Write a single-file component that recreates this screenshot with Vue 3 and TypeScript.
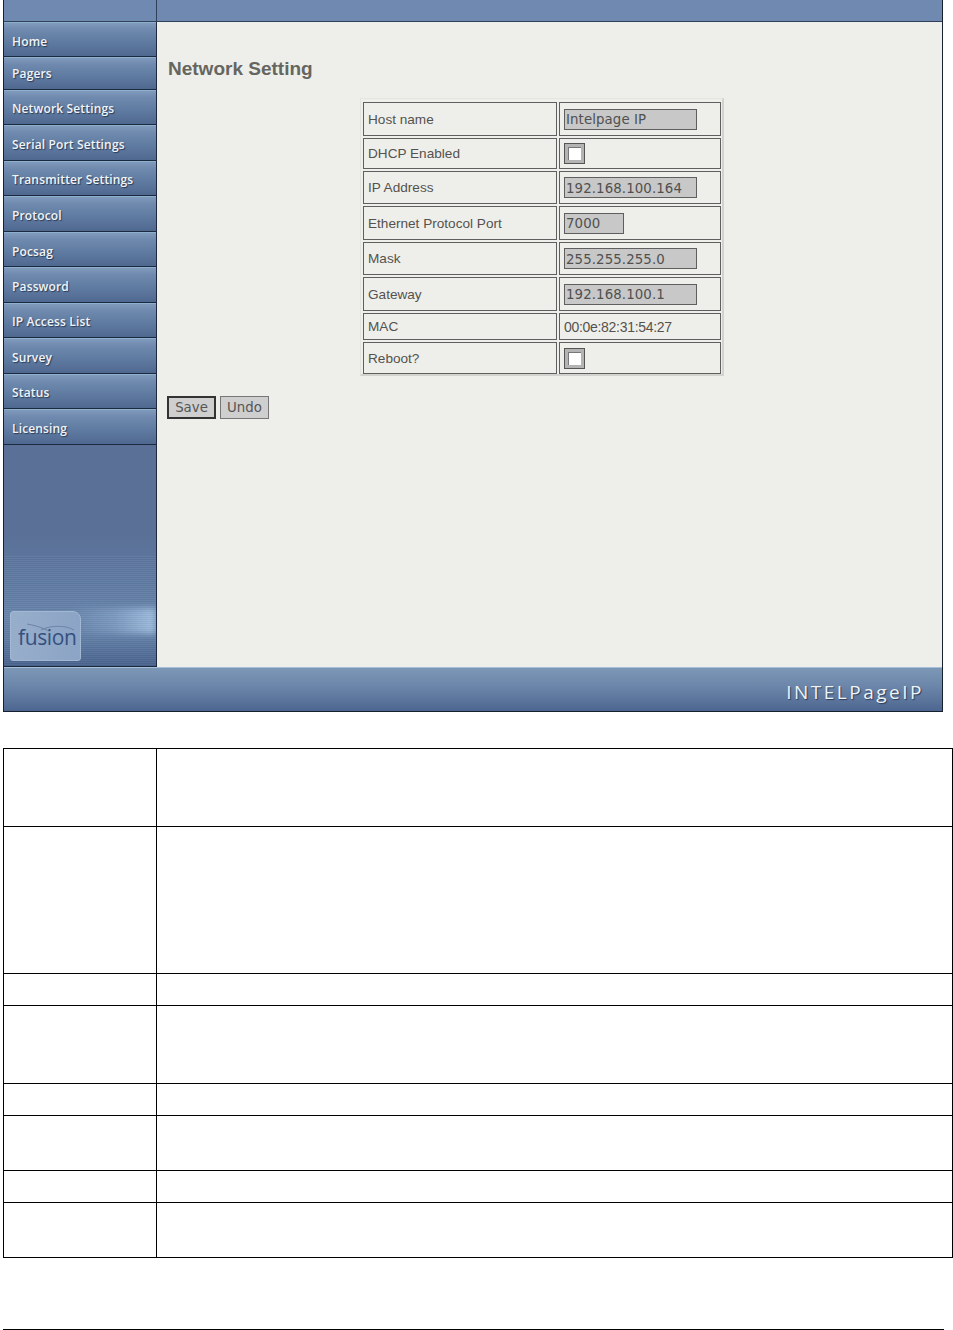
<script setup lang="ts">
const nav: { label: string; h: number; tight?: boolean; raised?: boolean }[] = [
  { label: 'Home', h: 35 },
  { label: 'Pagers', h: 33, tight: true },
  { label: 'Network Settings', h: 35, raised: true },
  { label: 'Serial Port Settings', h: 36 },
  { label: 'Transmitter Settings', h: 35, raised: true },
  { label: 'Protocol', h: 36 },
  { label: 'Pocsag', h: 35 },
  { label: 'Password', h: 36 },
  { label: 'IP Access List', h: 35, raised: true },
  { label: 'Survey', h: 36 },
  { label: 'Status', h: 35, raised: true },
  { label: 'Licensing', h: 36 }
]
const rows: { label: string; kind: 'text' | 'check' | 'plain'; value?: string; short?: boolean; h: number }[] = [
  { label: 'Host name', kind: 'text', value: 'Intelpage IP', h: 34 },
  { label: 'DHCP Enabled', kind: 'check', h: 31 },
  { label: 'IP Address', kind: 'text', value: '192.168.100.164', h: 33 },
  { label: 'Ethernet Protocol Port', kind: 'text', value: '7000', short: true, h: 34 },
  { label: 'Mask', kind: 'text', value: '255.255.255.0', h: 33 },
  { label: 'Gateway', kind: 'text', value: '192.168.100.1', h: 34 },
  { label: 'MAC', kind: 'plain', value: '00:0e:82:31:54:27', h: 27 },
  { label: 'Reboot?', kind: 'check', h: 32 }
]
const lower: number[] = [77, 146, 31, 77, 31, 54, 31, 54]
</script>

<template>
  <div class="page">
    <section class="shot">
      <div class="topbar">
        <div class="top-left"></div>
        <div class="top-right"></div>
      </div>
      <div class="middle">
        <aside class="side">
          <nav>
            <a
              v-for="n in nav"
              :key="n.label"
              class="nav-item"
              :class="{ tight: n.tight, raised: n.raised }"
              :style="{ height: n.h + 'px' }"
            >{{ n.label }}</a>
          </nav>
          <div class="side-rest">
            <div class="streak"></div>
            <div class="stripes"></div>
            <div class="logo">
              <svg class="arc" width="56" height="14" viewBox="0 0 56 14" aria-hidden="true">
                <path d="M8 2 C 14 3, 22 5, 30 9" fill="none" stroke="#6d84a8" stroke-width="1" />
                <path d="M22 8 C 32 3, 46 3, 55 8" fill="none" stroke="#6d84a8" stroke-width="1" />
              </svg>
              <span class="logo-text">fusion</span>
            </div>
          </div>
        </aside>
        <main class="content">
          <h1>Network Setting</h1>
          <div class="form-wrap">
            <div class="form">
              <template v-for="r in rows" :key="r.label">
                <div class="cell label" :style="{ height: r.h + 'px' }">{{ r.label }}</div>
                <div class="cell value" :style="{ height: r.h + 'px' }">
                  <span v-if="r.kind === 'text'" class="input" :class="{ short: r.short }">{{ r.value }}</span>
                  <span v-else-if="r.kind === 'check'" class="check"><i></i></span>
                  <span v-else class="mac">{{ r.value }}</span>
                </div>
              </template>
            </div>
          </div>
          <div class="buttons">
            <button class="btn primary" type="button">Save</button>
            <button class="btn" type="button">Undo</button>
          </div>
        </main>
      </div>
      <footer class="foot"><span class="brand">INTELPageIP</span></footer>
    </section>

    <section class="lower">
      <div v-for="(h, i) in lower" :key="i" class="lower-row" :style="{ height: h + 'px' }">
        <div class="lower-a"></div>
        <div class="lower-b"></div>
      </div>
    </section>

    <div class="rule"></div>
  </div>
</template>

<style>
html, body { margin: 0; background: #fff; }
</style>

<style scoped>
.page {
  width: 953px;
  height: 1330px;
  position: relative;
  overflow: hidden;
  background: #fff;
  font-family: "Liberation Sans", Arial, sans-serif;
}
.shot {
  width: 940px;
  height: 712px;
  margin-left: 3px;
  box-sizing: border-box;
  border: 1px solid #16202f;
  border-top: 0;
  display: flex;
  flex-direction: column;
  background: #eeefeb;
}
.topbar { display: flex; height: 22px; flex: none; background: #7089b0; border-bottom: 1px solid #2f4058; box-sizing: border-box; }
.top-left { width: 152px; border-right: 1px solid #2f4058; }
.top-right { flex: 1; }
.middle { display: flex; height: 645px; flex: none; }
.side {
  width: 153px;
  flex: none;
  box-sizing: border-box;
  border-right: 1px solid #1e2a3c;
  border-bottom: 1px solid #1e2a3c;
  display: flex;
  flex-direction: column;
  background: #5a7197;
}
.nav-item {
  display: flex;
  align-items: center;
  box-sizing: border-box;
  padding: 3px 0 0 8px;
  font-family: "Open Sans", "DejaVu Sans", sans-serif;
  font-weight: 600;
  font-size: 12px;
  letter-spacing: 0.15px;
  color: #f0f4f8;
  text-shadow: 1px 1px 1px #2c3c58;
  background: linear-gradient(#7f9abb 0, #6f8aae 20%, #5f7aa0 60%, #4f6890 100%);
  border-top: 1px solid #8eb0cf;
  border-bottom: 1px solid #1c2a40;
}
.nav-item.tight { padding-top: 0; }
.nav-item.raised { padding-top: 1px; }
.side-rest {
  position: relative;
  flex: 1;
  overflow: hidden;
  background: linear-gradient(#5a7097 0, #5a7097 40%, #5f7aa1 62%, #6784aa 78%, #5f7ca3 88%, #48628c 100%);
}
.streak {
  position: absolute;
  right: 0;
  bottom: 32px;
  width: 90px;
  height: 26px;
  background: linear-gradient(90deg, rgba(150, 180, 215, 0), rgba(150, 180, 215, .45) 55%, rgba(165, 195, 228, .9));
  filter: blur(3px);
}
.stripes {
  position: absolute;
  left: 0;
  right: 0;
  bottom: 0;
  height: 110px;
  background: repeating-linear-gradient(180deg, rgba(255, 255, 255, .05) 0 1px, rgba(40, 60, 100, .05) 1px 2px);
}
.logo {
  position: absolute;
  left: 6px;
  bottom: 5px;
  width: 71px;
  height: 50px;
  box-sizing: border-box;
  background: linear-gradient(90deg, #97aecb, #8ca4c5);
  border: 1px solid #a3b8d2;
  border-radius: 3px 8px 3px 3px;
}
.arc { position: absolute; left: 8px; top: 10px; }
.logo-text {
  position: absolute;
  left: 7px;
  top: 10px;
  font-family: "Open Sans", sans-serif;
  font-size: 21px;
  line-height: 30px;
  letter-spacing: -0.4px;
  color: #34507f;
}
.content { flex: 1; min-width: 0; padding: 0 0 0 10px; color: #555; }
h1 {
  margin: 0;
  padding: 35px 0 0 1px;
  font-size: 19px;
  line-height: 24px;
  font-weight: 700;
  color: #666660;
}
.form-wrap { padding: 17px 0 0 193px; }
.form {
  width: 364px;
  height: 278px;
  box-sizing: border-box;
  padding: 3px 1px 2px 2px;
  display: grid;
  grid-template-columns: 194px 162px;
  column-gap: 2px;
  row-gap: 2px;
  align-content: start;
  background: #eeefeb;
  border-right: 2px solid #d2d3cf;
  border-bottom: 2px solid #d2d3cf;
  border-top: 1px solid #e4e5e1;
  border-left: 1px solid #e4e5e1;
}
.cell {
  box-sizing: border-box;
  border: 1px solid #5f5f5f;
  display: flex;
  align-items: center;
  font-size: 13.6px;
  color: #55524e;
}
.label { padding-left: 4px; }
.value { padding-left: 4px; }
.input {
  width: 133px;
  height: 21px;
  box-sizing: border-box;
  border: 1px solid #5f5f5f;
  background: #c8c8c8;
  padding: 1px 0 0 1px;
  display: flex;
  align-items: center;
  font-family: "DejaVu Sans", sans-serif;
  font-size: 13.33px;
  letter-spacing: 0.1px;
  color: #505050;
}
.input.short { width: 60px; }
.check {
  width: 21px;
  height: 21px;
  box-sizing: border-box;
  border: 1px solid #555;
  background: #b4b4b4;
  padding: 3px;
  display: block;
}
.check i {
  display: block;
  width: 100%;
  height: 100%;
  background: #fff;
  box-shadow: inset 1px 1px 0 #777;
}
.mac { font-size: 14px; letter-spacing: -0.3px; }
.buttons { display: flex; gap: 4px; padding-top: 20px; }
.btn {
  height: 23px;
  width: 49px;
  padding: 0;
  margin: 0;
  box-sizing: border-box;
  border: 1px solid #777;
  background: #cfcfcf;
  font-family: "DejaVu Sans", sans-serif;
  font-size: 13.33px;
  color: #555;
}
.btn.primary { border: 2px solid #333; }
.foot {
  height: 44px;
  flex: none;
  box-sizing: border-box;
  border-top: 1px solid #a4c0da;
  display: flex;
  align-items: center;
  justify-content: flex-end;
  padding: 4px 20px 0 0;
  background: linear-gradient(#7d97b6 0, #6a85a9 45%, #4d6690 100%);
}
.brand {
  font-family: "Open Sans", sans-serif;
  font-weight: 500;
  font-size: 19px;
  letter-spacing: 2.5px;
  margin-right: -2px;
  color: #eef3f8;
  text-shadow: 1px 1px 1px #2c3c58;
}
.lower {
  width: 950px;
  margin: 36px 0 0 3px;
  box-sizing: border-box;
  border-top: 1px solid #000;
  border-left: 1px solid #000;
  border-right: 1px solid #000;
}
.lower-row { display: flex; box-sizing: content-box; border-bottom: 1px solid #000; }
.lower-a { width: 152px; border-right: 1px solid #000; }
.lower-b { flex: 1; }
.rule { width: 941px; height: 1px; margin: 71px 0 0 3px; background: #000; }
</style>
